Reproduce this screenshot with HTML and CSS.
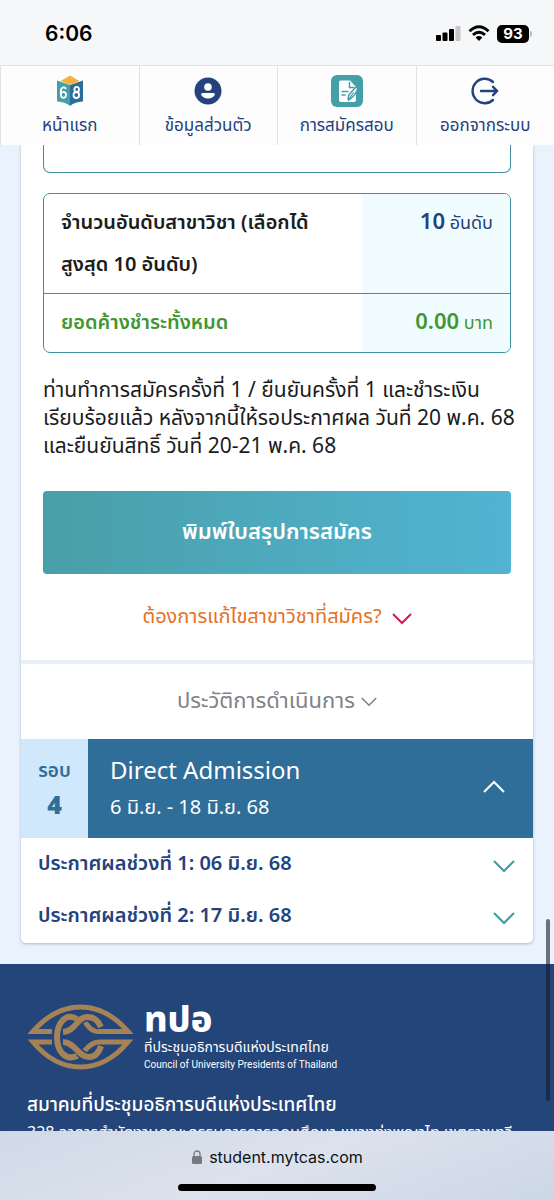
FILE: index.html
```html
<!DOCTYPE html>
<html lang="th">
<head>
<meta charset="utf-8">
<meta name="viewport" content="width=device-width, initial-scale=1">
<title>student.mytcas.com</title>
<link rel="stylesheet" href="styles.css">
</head>
<body>
<div class="screen">
  <header class="top">
    <div class="status">
      <time class="clock">6:06</time>
      <div class="indicators">
        <svg width="25" height="17" viewBox="0 0 25 17" aria-hidden="true">
          <rect x="0" y="10" width="5" height="6" rx="1"/><rect x="6.500" y="7.500" width="5" height="8.500" rx="1"/><rect x="13" y="4" width="5" height="12" rx="1"/><rect x="19.500" y="1" width="5" height="15" rx="1" fill="#c6c6c8"/>
        </svg>
        <svg width="22" height="17" viewBox="0 0 22 17" fill="none" stroke="#000" stroke-width="2.900" aria-hidden="true">
          <path d="M1.500 6.200Q11-2.600 20.500 6.200"/><path d="M5 9.900Q11 4.400 17 9.900"/><path d="M7.600 12.500Q11 9.600 14.400 12.500L11 16Z" fill="#000" stroke="none"/>
        </svg>
        <span class="battery">93</span>
      </div>
    </div>
    <nav class="tabs">
      <a class="tab" href="#home">
        <svg width="32" height="32" viewBox="0 0 32 32" aria-hidden="true">
          <path d="M3 5.500 16 10v21q-4-4-13-4.500Z" fill="#44a0a8"/><path d="M29 5.500 16 10v21q4-4 13-4.500Z" fill="#2c6e98"/><path d="M16 .500 25.500 6 16 10 6.500 6Z" fill="#f6b13c"/>
          <g fill="none" stroke="#fff" stroke-width="1.800"><path d="M11.700 14c-.5-2.600-4.900-2.400-4.900 2.500v2.500c0 5 5.200 4.800 5.200 1s-4-4-5.200-1"/><ellipse cx="22.700" cy="14.400" rx="2.300" ry="2.600"/><ellipse cx="22.300" cy="20" rx="2.800" ry="3"/></g>
        </svg>
        <span>หน้าแรก</span>
      </a>
      <a class="tab" href="#profile">
        <svg width="32" height="32" viewBox="0 0 32 32" aria-hidden="true"><circle cx="16" cy="16" r="13.500" fill="#24427c"/><circle cx="16" cy="12" r="3.800" fill="#fff"/><path d="M9 19.500q0-1.500 1.500-1.500h11q1.500 0 1.500 1.500-2 4-7 4t-7-4Z" fill="#fff"/></svg>
        <span>ข้อมูลส่วนตัว</span>
      </a>
      <a class="tab" href="#apply">
        <svg width="32" height="32" viewBox="0 0 32 32" aria-hidden="true"><rect width="32" height="32" rx="6" fill="#459fa8"/><path d="M10 5.500h9l6 6.500v3l-8 8v4H10a2 2 0 0 1-2-2v-17.500a2 2 0 0 1 2-2Z" fill="#fff"/><path d="M18 23l7-8v10a2 2 0 0 1-2 2H10v-3Z" fill="#fff"/><path d="M18.500 7v5.500h5" fill="none" stroke="#459fa8" stroke-width="1.500"/><path d="M10.500 16.500h7M10.500 20h4" stroke="#459fa8" stroke-width="1.600"/><path d="M17.500 25q-1-4 1.500-6.500l5-5.500q3-2 2.500 1.500-3 7-9 10.500Z" fill="#fff" stroke="#459fa8" stroke-width="1.500"/><path d="m17 25 5.500-7.500" stroke="#459fa8" stroke-width="1.200"/></svg>
        <span>การสมัครสอบ</span>
      </a>
      <a class="tab" href="#logout">
        <svg width="32" height="32" viewBox="0 0 32 32" fill="none" stroke="#24427c" stroke-width="2.400" stroke-linecap="round" stroke-linejoin="round" aria-hidden="true"><path d="M24 7A12.200 12.200 0 1 0 24 25M12 16h16M24 11.800 28.200 16 24 20.200"/></svg>
        <span>ออกจากระบบ</span>
      </a>
    </nav>
  </header>

  <div class="page">
    <main class="card">
      <section class="summary">
        <div class="panel-end"></div>
        <table class="totals">
          <tr><th scope="row">จำนวนอันดับสาขาวิชา (เลือกได้สูงสุด 10 อันดับ)</th><td><b>10</b> อันดับ</td></tr>
          <tr class="due"><th scope="row">ยอดค้างชำระทั้งหมด</th><td><b>0.00</b> บาท</td></tr>
        </table>
        <p class="note">ท่านทำการสมัครครั้งที่ 1 / ยืนยันครั้งที่ 1 และชำระเงิน<br>เรียบร้อยแล้ว หลังจากนี้ให้รอประกาศผล วันที่ 20 พ.ค. 68<br>และยืนยันสิทธิ์ วันที่ 20-21 พ.ค. 68</p>
        <button class="print" type="button">พิมพ์ใบสรุปการสมัคร</button>
        <button class="link edit" type="button">ต้องการแก้ไขสาขาวิชาที่สมัคร?
          <svg class="chev" width="20" height="12" viewBox="0 0 20 12" aria-hidden="true"><path d="m1 1 9 9 9-9"/></svg></button>
      </section>
      <button class="link history" type="button">ประวัติการดำเนินการ
        <svg class="chev" width="16" height="10" viewBox="0 0 20 12" aria-hidden="true"><path d="m1 1 9 9 9-9"/></svg></button>
      <button class="round" type="button">
        <span class="round-no"><span>รอบ</span><b>4</b></span>
        <span class="round-info"><span class="round-title">Direct Admission</span><span class="round-date">6 มิ.ย. - 18 มิ.ย. 68</span></span>
        <svg class="chev" width="22" height="13" viewBox="0 0 22 13" aria-hidden="true"><path d="m1 12 10-10 10 10"/></svg>
      </button>
      <div class="results">
        <button class="result" type="button">ประกาศผลช่วงที่ 1: 06 มิ.ย. 68
          <svg class="chev" width="22" height="13" viewBox="0 0 22 13" aria-hidden="true"><path d="m1 1 10 10 10-10"/></svg></button>
        <button class="result" type="button">ประกาศผลช่วงที่ 2: 17 มิ.ย. 68
          <svg class="chev" width="22" height="13" viewBox="0 0 22 13" aria-hidden="true"><path d="m1 1 10 10 10-10"/></svg></button>
      </div>
    </main>
    <footer class="footer">
      <div class="brand">
        <svg width="107" height="66" viewBox="0 0 107 66" fill="none" aria-hidden="true">
          <g stroke="#a58357" stroke-width="5">
            <path d="M25 27.500H6Q27 3 53.500 3T101 27.500H72C64 27.500 62 23 58 18"/>
            <path d="M25 38H6Q27 63 53.500 63T101 38H72C60 38 57 53 47 53"/>
          </g>
          <path d="M37 28C49 27 50 13 60 13 68 13 71 17 74 24" stroke="#24457a" stroke-width="9"/>
          <path d="M36 28C49 27 50 13 60 13 68 13 71 17 74 23" stroke="#a58357" stroke-width="6"/>
          <path d="M37 38C48 38 51 53 62 53 68 53 72 48 74 42" stroke="#24457a" stroke-width="9"/>
          <path d="M36 38C48 38 51 53 62 53 68 53 72 48 74 42" stroke="#a58357" stroke-width="6"/>
          <path d="M49 14C38 9 30 19 30 33s8 24 18 20" stroke="#24457a" stroke-width="10"/>
          <path d="M50 15C39 8 30 19 30 33s8 24 20 19" stroke="#a58357" stroke-width="6"/>
        </svg>
        <div class="brand-text"><strong>ทปอ</strong><span class="brand-th">ที่ประชุมอธิการบดีแห่งประเทศไทย</span><span class="brand-en">Council of University Presidents of Thailand</span></div>
      </div>
      <h2 class="org">สมาคมที่ประชุมอธิการบดีแห่งประเทศไทย</h2>
      <address class="address">328 อาคารสำนักงานคณะกรรมการการอุดมศึกษา แขวงทุ่งพญาไท เขตราชเทวี</address>
    </footer>
    <div class="scroll-thumb"></div>
  </div>

  <div class="browser-bar">
    <div class="url"><svg width="10" height="14" viewBox="0 0 10 14" aria-hidden="true"><rect x="0" y="6" width="10" height="8" rx="1.500" fill="#77797f"/><path d="M2 7V4a3 3 0 0 1 6 0v3" fill="none" stroke="#77797f" stroke-width="1.300"/></svg><span>student.mytcas.com</span></div>
    <div class="home-line"></div>
  </div>
</div>
</body>
</html>
```
FILE: styles.css
```css
* { box-sizing: border-box; }
body { margin: 0; font-family: "Noto Sans Thai", "Noto Sans", "Liberation Sans", sans-serif; color: #1b1c20; }
button { border: 0; background: none; padding: 0; font: inherit; color: inherit; cursor: pointer; }
a { color: inherit; text-decoration: none; }
.screen { height: 100vh; display: flex; flex-direction: column; background: #e9f2fd; }

.status { height: 65px; padding: 2px 25px 0 45px; display: flex; align-items: center; justify-content: space-between; background: #f6f7f8; font-family: Inter, sans-serif; }
.clock { font-size: 21px; font-weight: 600; color: #000; }
.indicators { display: flex; align-items: center; gap: 7px; }
.battery { position: relative; width: 32px; height: 18px; border-radius: 5px; background: #000; color: #fff; font-size: 15px; line-height: 18px; font-weight: 700; text-align: center; }
.battery::after { content: ""; position: absolute; left: 33px; top: 6px; width: 2px; height: 6px; border-radius: 0 2px 2px 0; background: #b9babd; }

.tabs { display: grid; grid-template-columns: repeat(4, 1fr); border-top: 1px solid #dfe1e4; background: #fdfdfe; color: #24427c; }
.tab { height: 79px; padding-top: 9px; display: flex; flex-direction: column; align-items: center; gap: 4px; border-left: 1px solid #dfe1e4; font-size: 17px; line-height: 30px; white-space: nowrap; }

.page { position: relative; flex: 1; min-height: 0; overflow: hidden; }
.card { margin: 0 21px; background: #fff; border-radius: 0 0 5px 5px; box-shadow: 0 1px 3px #a9b9cc; }
.summary { padding: 0 22px 27px; border-bottom: 4px solid #e8f0fa; }
.panel-end { height: 28px; border: 1px solid #3e929f; border-top: 0; border-radius: 0 0 7px 7px; }
.totals { width: 100%; margin-top: 20px; border: 1px solid #3e929f; border-radius: 7px; border-spacing: 0; overflow: hidden; font-size: 20px; line-height: 42px; }
.totals th, .totals td { padding: 8px 17px 7px; vertical-align: top; }
.totals th { text-align: left; font-weight: 600; }
.totals td { width: 148px; text-align: right; background: #f0fcfe; color: #24427c; font-size: 18px; white-space: nowrap; }
.totals b { font-size: 22px; font-weight: 600; }
.totals .due th, .totals .due td { border-top: 1px solid #3e929f; color: #3f9733; }
.note { margin: 24px 0 30px; font-size: 21px; line-height: 28px; white-space: nowrap; }
.print { width: 100%; height: 83px; border-radius: 4px; background: linear-gradient(90deg, #499fa8, #52b4d2); color: #fff; font-size: 22px; font-weight: 600; }
.chev { fill: none; stroke: currentColor; stroke-width: 2; flex: none; }
.link { display: flex; width: 100%; align-items: center; justify-content: center; white-space: nowrap; }
.edit { margin-top: 27px; gap: 10px; color: #e57124; font-size: 20px; line-height: 32px; }
.edit .chev { color: #cb1f4c; margin-top: 4px; }
.history { height: 75px; gap: 6px; color: #81818c; font-size: 22px; }

.round { width: 100%; height: 99px; display: flex; align-items: center; background: #2f6e98; color: #fff; text-align: left; padding-right: 28px; }
.round .chev { margin-bottom: 5px; }
.round-no { width: 67px; align-self: stretch; display: flex; flex-direction: column; align-items: center; justify-content: center; background: #cfe8fc; color: #2f6e98; font-size: 19px; line-height: 34px; font-weight: 600; }
.round-no b { font-size: 25px; }
.round-info { flex: 1; padding-left: 22px; display: flex; flex-direction: column; }
.round-title { font-size: 24px; line-height: 38px; }
.round-date { font-size: 20px; line-height: 34px; }
.results { padding-bottom: 1px; }
.result { width: 100%; height: 52px; padding: 0 18px 0 17px; display: flex; align-items: center; justify-content: space-between; color: #24427c; font-size: 20px; font-weight: 600; }
.result .chev { color: #419aa0; margin-top: 4px; }

.footer { margin-top: 21px; padding: 40px 27px 0; background: #24457a; color: #fff; white-space: nowrap; }
.brand { display: flex; align-items: flex-start; gap: 10px; }
.brand-text { display: flex; flex-direction: column; }
.brand-text strong { font-size: 36px; line-height: 34px; font-weight: 800; }
.brand-th { font-size: 14px; line-height: 20px; }
.brand-en { font-family: Roboto, sans-serif; font-size: 10px; line-height: 14px; }
.org { margin: 18px 0 0; font-size: 19px; line-height: 32px; font-weight: 500; }
.address { font-style: normal; font-size: 16px; line-height: 22px; }
.scroll-thumb { position: absolute; right: 4px; top: 774px; width: 4px; height: 182px; border-radius: 2px; background: rgba(20, 26, 40, .6); }

.browser-bar { height: 69px; padding-top: 15px; display: flex; flex-direction: column; align-items: center; gap: 16px; background: linear-gradient(160deg, #d0dae7, #dce2ed 50%, #ccd7e6); }
.url { display: flex; align-items: center; gap: 7px; padding-left: 1px; font: 16px/22px Inter, sans-serif; color: #101114; }
.home-line { width: 198px; height: 7px; border-radius: 4px; background: #000; }
```
